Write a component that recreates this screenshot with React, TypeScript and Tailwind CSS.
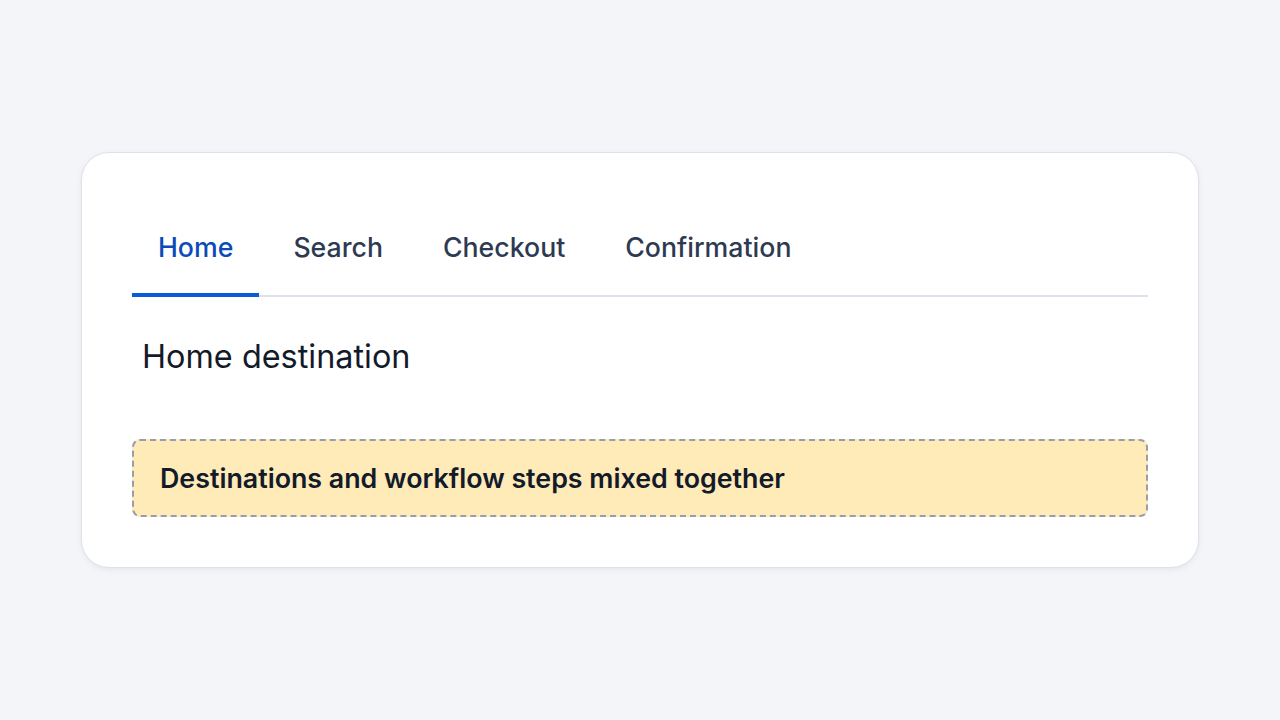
import { useState } from 'react';

const TABS = ['Home', 'Search', 'Checkout', 'Confirmation'];

export default function App() {
  const [active, setActive] = useState('Home');

  return (
    <div
      className="min-h-screen w-full bg-[#f3f5f9] flex items-center justify-center"
      style={{ fontFamily: 'Inter, "Noto Sans", sans-serif' }}
    >
      <div className="w-[1118px] rounded-[28px] border border-[#dde1e9] bg-white px-[50px] pt-[50px] pb-[50px] shadow-[0_2px_6px_rgba(15,23,42,0.06)]">
        <div className="flex gap-2 border-b-2 border-[#dde1ea]">
          {TABS.map(tab => {
            const isActive = tab === active;
            return (
              <button
                key={tab}
                onClick={() => setActive(tab)}
                className={`-mb-[2px] px-[26px] pt-[28px] pb-[30px] text-[26.7px] font-medium leading-[32px] border-b-4 ${
                  isActive ? 'border-[#0a5bdc] text-[#0b4bb8]' : 'border-transparent text-[#2d3a52]'
                }`}
              >
                {tab}
              </button>
            );
          })}
        </div>

        <h2 className="mt-[40px] ml-[10px] text-[32.4px] font-normal leading-[40px] text-[#131a2a]">
          {active} destination
        </h2>

        <div className="mt-[62px] rounded-lg border-2 border-dashed border-[#959dae] bg-[#feebb8] px-[26px] py-[20px]">
          <p className="text-[26.8px] font-semibold leading-[34px] text-[#131a2a]">
            Destinations and workflow steps mixed together
          </p>
        </div>
      </div>
    </div>
  );
}
